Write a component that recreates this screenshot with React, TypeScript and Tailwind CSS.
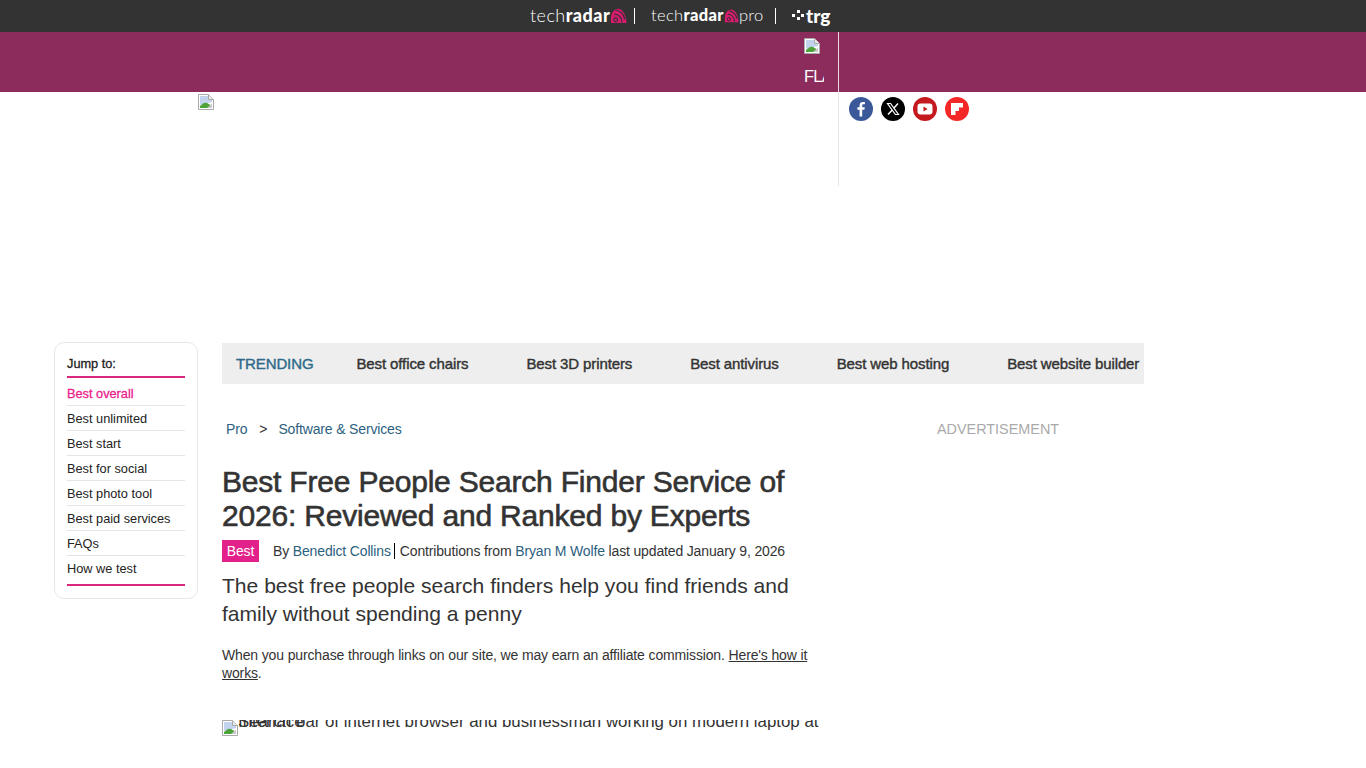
const BrokenImage = () => (
  <svg width="16" height="16" viewBox="0 0 16 16" className="shrink-0 block">
    <path d="M0.5 0.5H10.5L15.5 5.5V15.5H0.5Z" fill="#fff" stroke="#a9a9a9" />
    <path d="M10.5 0.5V5.5H15.5" fill="#e8e8e8" stroke="#a9a9a9" />
    <path d="M2 2H10V6H14V8L2 11Z" fill="#c3d3ee" />
    <path d="M2 14V12C5 9 7 8 9 9L14 12V14Z" fill="#4ea23a" />
    <path d="M9 14L14 9.5V14Z" fill="#c8c8c8" />
  </svg>
)

const RadarMark = ({ size = 18 }: { size?: number }) => (
  <svg width={size} height={size} viewBox="0 0 18 18" className="shrink-0">
    <path d="M1 17V12C1 5 6 1 10 2C14 3 17 9 17.5 17Z" fill="#d81b6f" />
    <circle cx="6" cy="13.5" r="2" fill="none" stroke="#333" strokeWidth="1.2" />
    <path d="M4.5 7.5A8 8 0 0 1 12.5 16.5" fill="none" stroke="#333" strokeWidth="1.3" />
    <path d="M6 3.2A12 12 0 0 1 15.5 13" fill="none" stroke="#333" strokeWidth="1.3" />
  </svg>
)

const Logo = ({ pro }: { pro?: boolean }) => (
  <div className={pro
    ? "flex items-center text-white font-['Lato',sans-serif] text-[16.5px] tracking-[0.35px] leading-none"
    : "flex items-center text-white font-['Lato',sans-serif] text-[18px] tracking-[0.45px] leading-none"}>
    <span className="font-light">tech</span>
    <span className="font-black">radar</span>
    <RadarMark size={pro ? 15 : 17} />
    {pro && <span className="font-light">pro</span>}
  </div>
)

const jumpLinks = ['Best unlimited', 'Best start', 'Best for social', 'Best photo tool', 'Best paid services', 'FAQs', 'How we test']
const trending = ['Best office chairs', 'Best 3D printers', 'Best antivirus', 'Best web hosting', 'Best website builder']

function App() {
  return (
    <div className="h-screen overflow-hidden bg-white font-['Liberation_Sans',Arial,sans-serif] text-[#333]">
      {/* network strip */}
      <div className="flex h-8 items-center bg-[#333] pl-[530px]">
        <div className="w-[104px] -translate-y-px"><Logo /></div>
        <div className="h-4 w-px bg-white" />
        <div className="ml-4 w-[108px] -translate-y-px"><Logo pro /></div>
        <div className="ml-[16px] h-4 w-px bg-white" />
        <div className="ml-4 flex -translate-y-px items-center gap-[2px] text-white">
          <svg width="12" height="10" viewBox="0 0 12 10">
            <rect x="5" y="0" width="3" height="3" fill="#fff" />
            <rect x="0" y="4" width="3" height="3" fill="#fff" />
            <rect x="9" y="4" width="3" height="3" fill="#fff" />
            <rect x="5" y="7" width="3" height="3" fill="#fff" />
          </svg>
          <span className="font-['Lato',sans-serif] text-[19px] font-black leading-none">trg</span>
        </div>
      </div>

      {/* brand band */}
      <div className="flex h-[60px] bg-[#8b2c5c]">
        <div className="flex w-[839px] border-r border-[#f0d8e4] pl-[804px]">
          <div className="w-5 overflow-hidden pt-[6px] text-[16.5px] leading-[18px] tracking-[-0.8px] text-white">
            <BrokenImage />
            <div className="mt-[13px] whitespace-nowrap">FLASH</div>
          </div>
        </div>
      </div>

      <div className="flex h-[94px]">
        <div className="w-[839px] border-r border-[#e5e5e5] pl-[198px] pt-[2px]">
          <BrokenImage />
        </div>
        <div className="flex gap-2 pl-[10px] pt-[5px]">
          <svg width="24" height="24" viewBox="0 0 24 24">
            <circle cx="12" cy="12" r="12" fill="#3b5998" />
            <path d="M13.2 19.5V12.8H15.4L15.8 10.2H13.2V8.6C13.2 7.8 13.5 7.3 14.5 7.3H15.9V5C15.6 5 14.8 4.9 13.9 4.9C11.9 4.9 10.6 6.1 10.6 8.3V10.2H8.4V12.8H10.6V19.5Z" fill="#fff" />
          </svg>
          <svg width="24" height="24" viewBox="0 0 24 24">
            <circle cx="12" cy="12" r="12" fill="#000" />
            <path d="M6.5 6.5H9.6L17.5 17.5H14.4Z" fill="none" stroke="#fff" strokeWidth="1.2" />
            <path d="M17 6.5L12.8 11.2M11 13.2L7 17.5" stroke="#fff" strokeWidth="1.4" />
          </svg>
          <svg width="24" height="24" viewBox="0 0 24 24">
            <circle cx="12" cy="12" r="12" fill="#c4191f" />
            <rect x="4.5" y="6.5" width="15" height="11" rx="3" fill="#fff" />
            <path d="M10.5 9.6V14.4L14.6 12Z" fill="#c4191f" />
          </svg>
          <svg width="24" height="24" viewBox="0 0 24 24">
            <circle cx="12" cy="12" r="12" fill="#f52828" />
            <path d="M6 6H18V10.5H14V14H10.5V18H6Z" fill="#fff" />
          </svg>
        </div>
      </div>

      {/* page body */}
      <div className="mt-[156px] flex pl-[54px]">
        <aside className="h-[257px] w-[144px] rounded-[10px] border border-[#e8e8e8] px-3 pt-[13px] text-[12.75px] text-[#222]">
          <div className="border-b-2 border-[#d9267f] pb-[4px] leading-4 [-webkit-text-stroke:0.3px]">Jump to:</div>
          <div className="flex h-[28px] items-center border-b border-[#e5e5e5] pt-[5px] text-[#e91e8c] [-webkit-text-stroke:0.3px]">Best overall</div>
          {jumpLinks.map((item, i) => (
            <div
              key={item}
              className={i === jumpLinks.length - 1
                ? 'flex h-[30px] items-center border-b-2 border-[#d9267f] pb-[3px]'
                : 'flex h-[25px] items-center border-b border-[#e5e5e5] pt-[2px]'}
            >
              {item}
            </div>
          ))}
        </aside>

        <main className="ml-6 w-[922px]">
          <div className="mt-px flex h-[41px] items-center overflow-hidden whitespace-nowrap bg-[#eeeeee] pl-[14px] pt-px text-[15px] tracking-[-0.11px] text-[#333] [-webkit-text-stroke:0.4px]">
            <span className="mr-[43px] text-[#2d6a8a]">TRENDING</span>
            {trending.map((item) => (
              <span key={item} className="mr-[58px]">{item}</span>
            ))}
          </div>

          <div className="flex">
            <article className="w-[600px]">
              <div className="mt-[36px] flex pl-1 text-[14px] leading-[18px] tracking-[-0.15px] text-[#2d5f7f]">
                <span>Pro</span>
                <span className="ml-[12px] mr-[11px] text-[#333]">&gt;</span>
                <span>Software &amp; Services</span>
              </div>
              <h1 className="mt-[27px] text-[30px] font-normal leading-[34px] tracking-[-0.2px] text-[#333] [-webkit-text-stroke:0.6px]">
                Best Free People Search Finder Service of 2026: Reviewed and Ranked by Experts
              </h1>
              <div className="mt-[7px] flex h-[22px] items-center whitespace-nowrap text-[14px] tracking-[-0.15px]">
                <span className="flex h-[22px] w-[37px] items-center justify-center bg-[#e3218a] text-white">Best</span>
                <span className="ml-[14px]">By&nbsp;</span>
                <span className="text-[#2d5f7f]">Benedict Collins</span>
                <span className="ml-[3px] mr-[5px] h-4 w-px bg-black" />
                <span>Contributions from&nbsp;</span>
                <span className="text-[#2d5f7f]">Bryan M Wolfe</span>
                <span>&nbsp;last updated January 9, 2026</span>
              </div>
              <p className="mt-[10px] text-[21.07px] leading-[28px] text-[#333]">
                The best free people search finders help you find friends and family without spending a penny
              </p>
              <p className="mt-[18px] text-[14px] leading-[18px] tracking-[-0.14px] text-[#333]">
                When you purchase through links on our site, we may earn an affiliate commission.{' '}
                <span className="underline">Here's how it works</span>.
              </p>
              <div className="relative mt-[38px] flex h-4 overflow-hidden whitespace-nowrap text-[16.85px] leading-[18px]">
                <BrokenImage />
                <span className="absolute left-4 -top-[7px] text-[#333]">Search bar</span>
                <span className="absolute left-4 -top-[7px] text-[#333]">Interface</span>
                <span className="absolute left-[103px] -top-[7px] text-[#333]">of internet browser and businessman working on modern laptop at</span>
              </div>
            </article>
            <div className="ml-[115px] mt-[36px] text-[14.4px] leading-[18px] text-[#aaa]">ADVERTISEMENT</div>
          </div>
        </main>
      </div>
    </div>
  )
}

export default App
